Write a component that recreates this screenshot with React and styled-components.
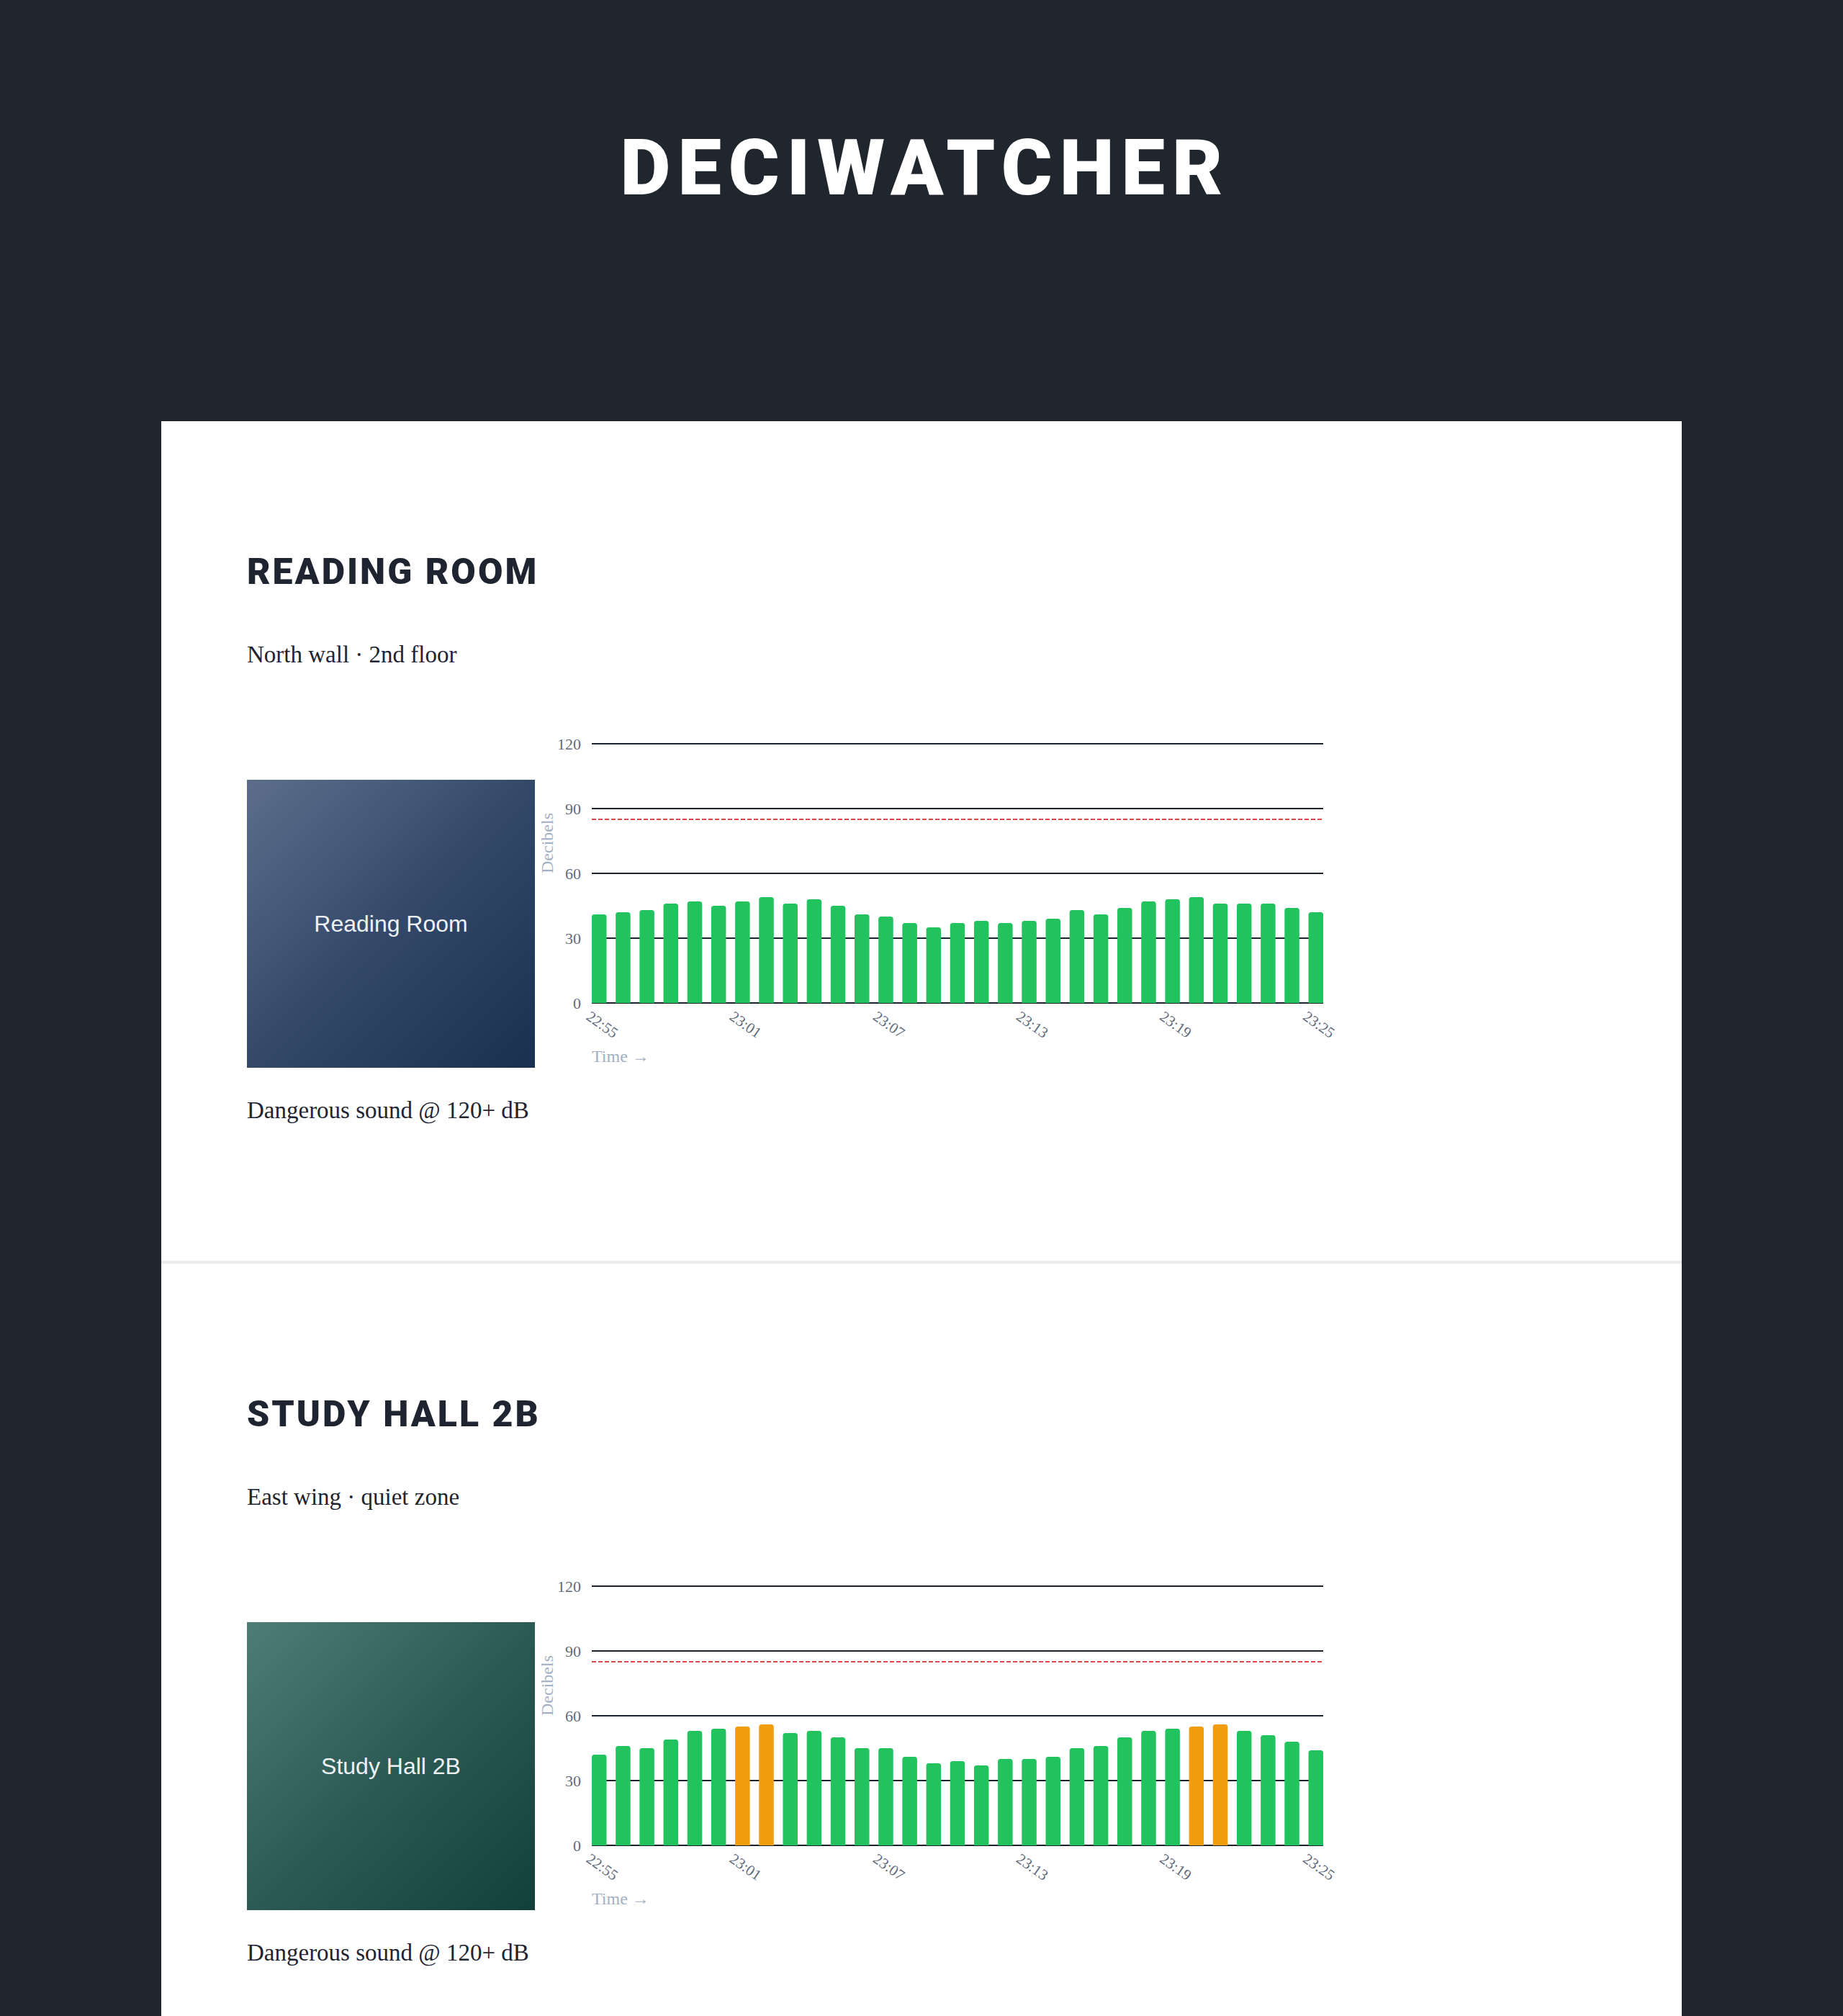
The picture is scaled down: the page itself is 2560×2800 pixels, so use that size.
import React from "react";
import styled, { createGlobalStyle } from "styled-components";

const GlobalStyle = createGlobalStyle`
  body {
    margin: 0;
    background-color: #20262e;
  }
`;

const Header = styled.header`
  height: 585px;
  padding-top: 179px;
  box-sizing: border-box;
  text-align: center;
`;

const Title = styled.h1`
  margin: 0;
  padding-left: 10px;
  font-family: Roboto, "Open Sans", sans-serif;
  font-weight: 900;
  font-size: 108px;
  line-height: 1;
  letter-spacing: 10px;
  color: #ffffff;
`;

const Card = styled.main`
  width: 2112px;
  margin: 0 auto;
  background-color: #ffffff;
`;

const Section = styled.section`
  padding: 184px 119px 189px;
  border-bottom: 4px solid #ebebeb;

  &:last-child {
    border-bottom: none;
  }
`;

const RoomName = styled.h2`
  margin: 0;
  font-family: Roboto, "Open Sans", sans-serif;
  font-weight: 900;
  font-size: 50px;
  line-height: 1;
  letter-spacing: 3px;
  color: #1f2530;
`;

const Note = styled.p`
  margin: ${(p) => p.$top}px 0 0;
  font-family: "Liberation Serif", serif;
  font-size: 33px;
  line-height: 40px;
  color: #1f2530;
`;

const Row = styled.div`
  display: flex;
  align-items: flex-end;
  margin-top: 74px;
`;

const Photo = styled.div`
  width: 400px;
  height: 400px;
  flex-shrink: 0;
  display: flex;
  align-items: center;
  justify-content: center;
  background: ${(p) => p.$gradient};
  font-family: "Liberation Sans", Arial, sans-serif;
  font-size: 32px;
  color: #eef2f4;
`;

const Plot = styled.svg`
  display: block;
  flex-shrink: 0;
  overflow: visible;
`;

const tones = {
  slate: "linear-gradient(135deg, #5c6e8b 0%, #34496a 50%, #1a3051 100%)",
  teal: "linear-gradient(135deg, #4f7c76 0%, #2c5a55 50%, #123f3a 100%)",
};

const rooms = [
  {
    name: "Reading Room",
    where: "North wall · 2nd floor",
    tone: "slate",
    levels: [
      41, 42, 43, 46, 47, 45, 47, 49, 46, 48, 45, 41, 40, 37, 35, 37, 38, 37,
      38, 39, 43, 41, 44, 47, 48, 49, 46, 46, 46, 44, 42,
    ],
  },
  {
    name: "Study Hall 2B",
    where: "East wing · quiet zone",
    tone: "teal",
    levels: [
      42, 46, 45, 49, 53, 54, 55, 56, 52, 53, 50, 45, 45, 41, 38, 39, 37, 40,
      40, 41, 45, 46, 50, 53, 54, 55, 56, 53, 51, 48, 44,
    ],
  },
];

// minute labels starting at 22:55
const stamp = (i) => {
  const total = 22 * 60 + 55 + i;
  const h = Math.floor(total / 60);
  const m = total % 60;
  return `${h}:${String(m).padStart(2, "0")}`;
};

const LevelChart = ({ levels }) => {
  const left = 79;
  const right = 1095;
  const top = 30;
  const base = 390;
  const perDb = (base - top) / 120;
  const barW = 20.5;
  const step = (right - left - barW) / (levels.length - 1);
  const r = 3.5;

  const barPath = (x, h) => {
    const t = base - h;
    return `M${x},${base} L${x},${t + r} Q${x},${t} ${x + r},${t} L${
      x + barW - r
    },${t} Q${x + barW},${t} ${x + barW},${t + r} L${x + barW},${base} Z`;
  };

  return (
    <Plot width="1120" height="480" viewBox="0 0 1120 480">
      <text
        x="0"
        y="0"
        transform="translate(25 168) rotate(-90)"
        textAnchor="middle"
        fontFamily="Liberation Serif, serif"
        fontSize="24"
        fill="#a3afc2"
      >
        Decibels
      </text>

      {[0, 30, 60, 90, 120].map((v) => (
        <g key={v}>
          <text
            x="64"
            y={base - v * perDb}
            dy="0.35em"
            textAnchor="end"
            fontFamily="Liberation Serif, serif"
            fontSize="22"
            fill="#5f6b7d"
          >
            {v}
          </text>
          <line
            x1={left}
            x2={right}
            y1={base - v * perDb}
            y2={base - v * perDb}
            stroke="#1c222b"
            strokeWidth="2"
          />
        </g>
      ))}

      <line
        x1={left}
        x2={right}
        y1={base - 85 * perDb}
        y2={base - 85 * perDb}
        stroke="#e04848"
        strokeWidth="2"
        strokeDasharray="6 3"
      />

      {levels.map((db, i) => (
        <path
          key={i}
          d={barPath(left + i * step, db * perDb)}
          fill={db >= 55 ? "#f29d0f" : "#22c35e"}
        />
      ))}

      {levels.map((_, i) =>
        i % 6 === 0 ? (
          <text
            key={i}
            x="0"
            y="0"
            transform={`translate(${left + i * step - 9} 412) rotate(35)`}
            fontFamily="Liberation Serif, serif"
            fontSize="21"
            fill="#5f6b7d"
          >
            {stamp(i)}
          </text>
        ) : null
      )}

      <text
        x={left}
        y="472"
        fontFamily="Liberation Serif, serif"
        fontSize="24"
        fill="#a3afc2"
      >
        Time →
      </text>
    </Plot>
  );
};

const App = () => {
  return (
    <>
      <GlobalStyle />
      <Header>
        <Title>DECIWATCHER</Title>
      </Header>
      <Card>
        {rooms.map((room) => (
          <Section key={room.name}>
            <RoomName>{room.name.toUpperCase()}</RoomName>
            <Note $top={70}>{room.where}</Note>
            <Row>
              <Photo $gradient={tones[room.tone]}>{room.name}</Photo>
              <LevelChart levels={room.levels} />
            </Row>
            <Note $top={39}>Dangerous sound @ 120+ dB</Note>
          </Section>
        ))}
      </Card>
    </>
  );
};

export default App;
